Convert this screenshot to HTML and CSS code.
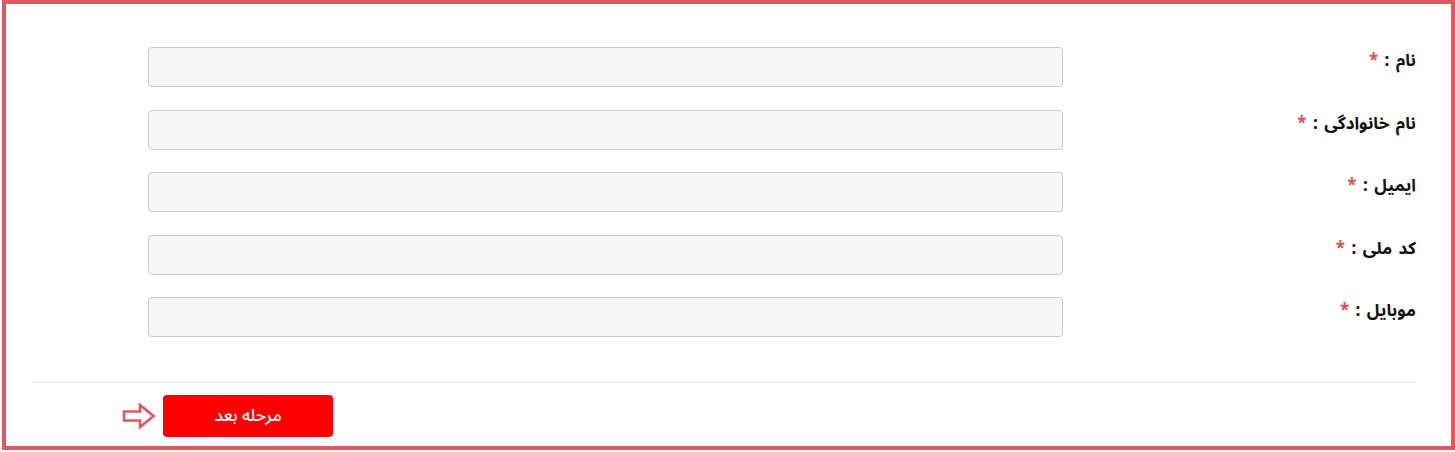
FILE: index.html
```html
<!DOCTYPE html>
<html lang="fa" dir="rtl">
<head>
<meta charset="utf-8">
<title>فرم</title>
<link rel="stylesheet" href="styles.css">
</head>
<body>
<div class="frame">
  <form class="form">
    <div class="row">
      <label class="label">نام : <span class="req">*</span></label>
      <div class="field"><input class="input" type="text"></div>
    </div>
    <div class="row">
      <label class="label">نام خانوادگی : <span class="req">*</span></label>
      <div class="field"><input class="input" type="text"></div>
    </div>
    <div class="row">
      <label class="label">ایمیل : <span class="req">*</span></label>
      <div class="field"><input class="input" type="text"></div>
    </div>
    <div class="row">
      <label class="label">کد ملی : <span class="req">*</span></label>
      <div class="field"><input class="input" type="text"></div>
    </div>
    <div class="row">
      <label class="label">موبایل : <span class="req">*</span></label>
      <div class="field"><input class="input" type="text"></div>
    </div>
    <hr class="divider">
    <div class="actions">
      <button class="btn" type="button">مرحله بعد</button>
      <svg class="arrow" width="34" height="28" viewBox="0 0 34 28">
        <polygon points="2,9.5 18,9.5 18,3 31.5,14 18,25 18,18.5 2,18.5" fill="none" stroke="#e0575d" stroke-width="2.6" stroke-linejoin="miter"/>
      </svg>
    </div>
  </form>
</div>
</body>
</html>
```

FILE: styles.css
```css
* { box-sizing: border-box; }
html, body { margin: 0; padding: 0; background: #fff; }
body {
  font-family: "Noto Sans Arabic", "Noto Sans", "DejaVu Sans", sans-serif;
  color: #111;
}
.frame {
  width: 1453px;
  height: 450px;
  border: 4px solid #e0575d;
  padding: 43px 35px 0 28px;
}
.form {
  display: flex;
  flex-direction: column;
}
.row {
  display: flex;
  align-items: flex-start;
  height: 40px;
  margin-bottom: 22.5px;
}
.label {
  width: 353px;
  flex: none;
  padding-top: 2px;
  font-size: 17px;
  font-weight: bold;
  line-height: 24px;
  text-align: right;
  word-spacing: 2px;
}
.req { color: #d9534f; }
.field {
  width: 915px;
  flex: none;
}
.input {
  display: block;
  width: 100%;
  height: 40px;
  background: #f7f7f7;
  border: 1px solid #cccccc;
  border-radius: 4px;
  outline: none;
}
.divider {
  border: 0;
  border-top: 1px solid #e6e6e6;
  margin: 22px 0 0 -3px;
  height: 0;
}
.actions {
  display: flex;
  align-items: center;
  margin-top: 12px;
  padding-right: 1083px;
  gap: 7px;
}
.btn {
  width: 170px;
  height: 42px;
  flex: none;
  background: #ff0000;
  color: #fff;
  border: 0;
  border-radius: 4px;
  font-family: "Noto Sans Arabic", "DejaVu Sans", sans-serif;
  font-size: 17px;
  font-weight: 500;
}
.arrow { flex: none; display: block; }
```
